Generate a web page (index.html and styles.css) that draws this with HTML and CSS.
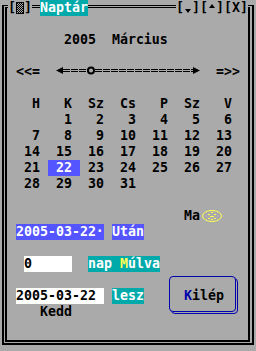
FILE: index.html
```html
<!DOCTYPE html>
<html lang="hu">
<head>
    <meta charset="UTF-8">
    <meta name="viewport" content="width=device-width, initial-scale=1.0">
    <title>Naptár</title>
    <link rel="stylesheet" href="styles.css">
</head>
<body>
    <div class="cim-sor">
        <span class="cim-gomb">[<svg class="ikon" width="8" height="16" viewBox="0 0 8 16">
            <defs>
                <pattern id="pontok" width="2" height="2" patternUnits="userSpaceOnUse">
                    <rect x="0" y="0" width="1" height="1" fill="#000"/>
                    <rect x="1" y="1" width="1" height="1" fill="#000"/>
                </pattern>
            </defs>
            <rect x="0.5" y="2.5" width="7" height="11" fill="url(#pontok)" stroke="#000"/>
        </svg>]</span>
        <span class="cim">Naptár</span>
        <span class="ablak-gombok">[<svg class="ikon" width="8" height="16" viewBox="0 0 8 16"><polygon points="1,9 7,9 4,13" fill="#000"/></svg>][<svg class="ikon" width="8" height="16" viewBox="0 0 8 16"><polygon points="1,8 7,8 4,4" fill="#000"/></svg>][X]</span>
    </div>

    <div class="keret-kulso">
        <div class="keret-belso">
            <div class="honap">2005&nbsp;&nbsp;Március</div>

            <div class="csuszka">
                <span>&lt;&lt;=</span>
                <svg class="savsor" width="144" height="16" viewBox="0 0 144 16">
                    <polygon points="0,6.5 7,3 7,10" fill="#000"/>
                    <line x1="7" y1="5.5" x2="137" y2="5.5" stroke="#000" stroke-dasharray="7 1"/>
                    <line x1="7" y1="7.5" x2="137" y2="7.5" stroke="#000" stroke-dasharray="7 1"/>
                    <polygon points="137,3 137,10 144,6.5" fill="#000"/>
                    <circle cx="35" cy="6.5" r="3" fill="#aaaaaa" stroke="#000" stroke-width="2"/>
                </svg>
                <span>=&gt;&gt;</span>
            </div>

            <div class="naptar">
                <span>H</span><span>K</span><span>Sz</span><span>Cs</span><span>P</span><span>Sz</span><span>V</span>
                <span></span><span>1</span><span>2</span><span>3</span><span>4</span><span>5</span><span>6</span>
                <span>7</span><span>8</span><span>9</span><span>10</span><span>11</span><span>12</span><span>13</span>
                <span>14</span><span>15</span><span>16</span><span>17</span><span>18</span><span>19</span><span>20</span>
                <span>21</span><span class="mai">22</span><span>23</span><span>24</span><span>25</span><span>26</span><span>27</span>
                <span>28</span><span>29</span><span>30</span><span>31</span>
            </div>

            <div class="ma-sor">
                <span>Ma</span>
                <svg class="ma-gomb" width="24" height="16" viewBox="0 0 24 16">
                    <ellipse cx="10" cy="8" rx="9.5" ry="5.5" fill="none" stroke="#ffff55"/>
                    <rect x="9" y="4" width="2" height="1" fill="#ffff55"/>
                    <rect x="6" y="6" width="2" height="1" fill="#ffff55"/>
                    <rect x="12" y="6" width="2" height="1" fill="#ffff55"/>
                    <rect x="8" y="8" width="4" height="1" fill="#ffff55"/>
                    <rect x="6" y="10" width="2" height="1" fill="#ffff55"/>
                    <rect x="12" y="10" width="2" height="1" fill="#ffff55"/>
                    <rect x="9" y="11" width="2" height="1" fill="#ffff55"/>
                </svg>
            </div>

            <div class="sor">
                <span class="kek datum">2005-03-22·</span>
                <span class="kek utan">Után</span>
            </div>

            <div class="sor tavol">
                <span class="mezo nap-mezo">0</span>
                <span class="turkiz mulva">nap&nbsp;<b class="gyorsgomb">M</b>úlva</span>
            </div>

            <div class="also">
                <div class="eredmeny">
                    <div class="sor">
                        <span class="mezo datum">2005-03-22</span>
                        <span class="turkiz lesz">lesz</span>
                    </div>
                    <div class="nap-nev">Kedd</div>
                </div>
                <div class="kilep"><span class="kek-betu">K</span>ilép</div>
            </div>
        </div>
    </div>
</body>
</html>
```

FILE: styles.css
```css
body {
    margin: 0;
    width: 256px;
    height: 351px;
    overflow: hidden;
    background: #aaaaaa;
    color: #000;
    font-family: "DejaVu Sans Mono", monospace;
    font-weight: bold;
    font-size: 13.28px;
    line-height: 16px;
    white-space: nowrap;
}
.cim-sor {
    position: absolute;
    top: 0;
    left: 0;
    height: 16px;
    display: flex;
}
.cim-gomb {
    margin-left: 8px;
    width: 24px;
    background: #aaaaaa;
    display: flex;
}
.ikon {
    display: block;
}
.cim {
    margin-left: 8px;
    width: 48px;
    background: #00aaaa;
    color: #fff;
}
.ablak-gombok {
    margin-left: 88px;
    width: 72px;
    background: #aaaaaa;
    display: flex;
}
.keret-kulso {
    margin: 5px 2px 0 2px;
    height: 340px;
    box-sizing: border-box;
    border-style: solid;
    border-color: #000;
    border-width: 1px 2px 2px 2px;
}
.keret-belso {
    margin: 1px 2px 1px 1px;
    height: 335px;
    box-sizing: border-box;
    border-style: solid;
    border-color: #000;
    border-width: 1px 2px 2px 2px;
    padding: 24px 0 0 1px;
}
.honap {
    margin-left: 56px;
}
.csuszka {
    margin-top: 16px;
    margin-left: 8px;
    display: flex;
    height: 16px;
}
.savsor {
    display: block;
    margin: 0 16px;
}
.naptar {
    margin-top: 16px;
    margin-left: 8px;
    display: grid;
    grid-template-columns: repeat(7, 32px);
    grid-auto-rows: 16px;
}
.naptar span {
    padding: 0 8px;
    text-align: right;
}
.naptar .mai {
    background: #5555ff;
    color: #fff;
}
.ma-sor {
    margin-top: 16px;
    margin-left: 176px;
    display: flex;
    height: 16px;
}
.ma-gomb {
    display: block;
    margin-left: 2px;
}
.sor {
    display: flex;
    height: 16px;
}
.tavol {
    margin-top: 16px;
}
.kek {
    background: #5555ff;
    color: #fff;
}
.turkiz {
    background: #00aaaa;
    color: #fff;
}
.gyorsgomb {
    color: #ffff55;
    font-weight: bold;
}
.datum {
    margin-left: 8px;
    width: 88px;
    flex: none;
}
.utan, .lesz {
    margin-left: 8px;
    width: 32px;
    flex: none;
}
.mezo {
    background: #fff;
    color: #000;
}
.nap-mezo {
    margin-left: 16px;
    width: 48px;
}
.mulva {
    margin-left: 16px;
    width: 72px;
}
.also {
    margin-top: 16px;
    display: flex;
}
.nap-nev {
    margin-left: 32px;
}
.kilep {
    position: relative;
    margin: -12px 0 0 25px;
    width: 67px;
    height: 36px;
    box-sizing: border-box;
    padding: 11px 0 0 14px;
    border: 1px solid #0000aa;
    border-radius: 4px;
    background: #aaaaaa;
}
.kilep::after {
    content: "";
    position: absolute;
    top: 1px;
    left: 1px;
    width: 67px;
    height: 36px;
    box-sizing: border-box;
    border: 1px solid #0000aa;
    border-radius: 4px;
    z-index: -1;
}
.kek-betu {
    color: #0000aa;
}
```
